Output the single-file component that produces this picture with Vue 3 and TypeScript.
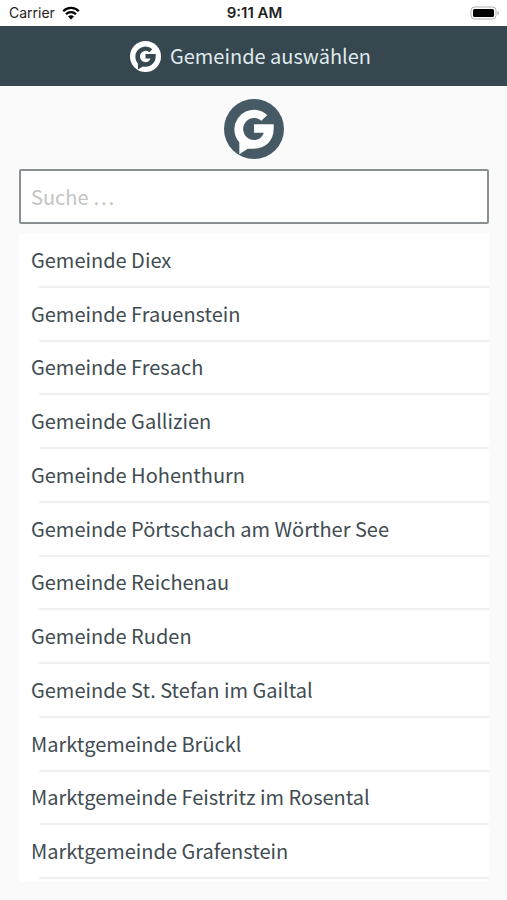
<script setup lang="ts">
import { computed, ref } from 'vue'

const query = ref('')

const municipalities: string[] = [
  'Gemeinde Diex',
  'Gemeinde Frauenstein',
  'Gemeinde Fresach',
  'Gemeinde Gallizien',
  'Gemeinde Hohenthurn',
  'Gemeinde Pörtschach am Wörther See',
  'Gemeinde Reichenau',
  'Gemeinde Ruden',
  'Gemeinde St. Stefan im Gailtal',
  'Marktgemeinde Brückl',
  'Marktgemeinde Feistritz im Rosental',
  'Marktgemeinde Grafenstein',
]

const matches = computed(() =>
  municipalities.filter((name) => name.toLowerCase().includes(query.value.trim().toLowerCase())),
)

const glyph =
  'M130 48A59 59 0 0 0 31 90C31 106 36 119 46 130V166L71 149H90C124 149 149 125 149 90V76H90V101H119C115 115 104 123 90 123A33 33 0 1 1 112 65Z'
</script>

<template>
  <div class="screen">
    <div class="status">
      <div class="carrier">
        <span>Carrier</span>
        <svg class="wifi" viewBox="0 0 18 14" aria-hidden="true">
          <path
            d="M1.2 5.2a11 11 0 0 1 15.6 0M4 8.2a7.1 7.1 0 0 1 10 0"
            fill="none"
            stroke="#000"
            stroke-width="2.3"
          />
          <path d="M9 13.6 6 10.6a4.3 4.3 0 0 1 6 0Z" />
        </svg>
      </div>
      <span class="time">9:11 AM</span>
      <svg class="battery" viewBox="0 0 30 14" aria-hidden="true">
        <rect class="shell" x="1" y="1" width="25" height="12" rx="3.5" />
        <rect x="3" y="3" width="21" height="8" rx="1.5" />
        <path class="cap" d="M27.5 5c2 .8 2 3.2 0 4Z" />
      </svg>
    </div>

    <header class="bar">
      <svg class="bar-logo" viewBox="0 0 180 180" aria-hidden="true">
        <circle cx="90" cy="90" r="90" />
        <path :d="glyph" />
      </svg>
      <h1>Gemeinde auswählen</h1>
    </header>

    <main>
      <svg class="logo" viewBox="0 0 180 180" aria-hidden="true">
        <circle cx="90" cy="90" r="90" />
        <path :d="glyph" />
      </svg>
      <input v-model="query" class="search" type="text" placeholder="Suche …" aria-label="Suche" />
      <ul class="list">
        <li v-for="name in matches" :key="name">
          <button type="button">{{ name }}</button>
        </li>
      </ul>
    </main>
  </div>
</template>

<style>
body {
  background: #fafafa;
}
</style>

<style scoped>
.screen {
  display: flex;
  flex-direction: column;
  min-height: 100vh;
  box-sizing: border-box;
  background: #fafafa;
  color: #414c52;
  font-family: 'Noto Sans CJK SC', 'Noto Sans', sans-serif;
}

.status {
  display: grid;
  grid-template-columns: 1fr auto 1fr;
  align-items: center;
  height: 26px;
  padding: 0 7px 0 9px;
  background: #fff;
  color: #222;
  font: 14px/26px Inter, sans-serif;
}

.carrier {
  display: flex;
  align-items: center;
  gap: 7px;
}

.wifi {
  width: 18px;
  height: 14px;
}

.time {
  font-size: 15px;
  font-weight: 600;
}

.battery {
  justify-self: end;
  width: 30px;
  height: 14px;
}

.battery .shell {
  fill: #fff;
  stroke: #b0b0b0;
}

.battery .cap {
  fill: #b0b0b0;
}

.bar {
  display: flex;
  align-items: center;
  justify-content: center;
  gap: 9px;
  height: 60px;
  padding-right: 6px;
  background: #37474f;
}

.bar h1 {
  margin: 0;
  color: #dfeaee;
  font-size: 20px;
  font-weight: 400;
  line-height: 30px;
}

.bar-logo {
  width: 31px;
  height: 31px;
  fill: #fff;
}

.bar-logo path {
  fill: #37474f;
}

main {
  display: flex;
  flex: 1;
  flex-direction: column;
  padding: 13px 18px 18px 19px;
}

.logo {
  align-self: center;
  width: 60px;
  height: 60px;
  fill: #455a64;
}

.logo path {
  fill: #fff;
}

.search {
  box-sizing: border-box;
  width: 100%;
  height: 55px;
  margin: 10px 0;
  padding: 0 10px;
  border: 2px solid #8a9092;
  border-radius: 2px;
  outline: none;
  background: #fff;
  color: inherit;
  font: inherit;
  font-size: 20px;
}

.search::placeholder {
  color: #c4c4c4;
  opacity: 1;
}

.list {
  display: flex;
  flex: 1;
  flex-direction: column;
  margin: 0;
  padding: 0 0 3px;
  background: #fff;
  list-style: none;
}

.list li {
  display: flex;
  flex: 1;
  flex-direction: column;
  max-height: 54px;
}

.list li::after {
  height: 2px;
  margin-left: 20px;
  background: #f0f0f0;
  content: '';
}

.list button {
  flex: 1;
  padding: 0 12px;
  border: 0;
  background: none;
  color: inherit;
  font: inherit;
  font-size: 20px;
  line-height: 30px;
  text-align: left;
  cursor: pointer;
}
</style>
